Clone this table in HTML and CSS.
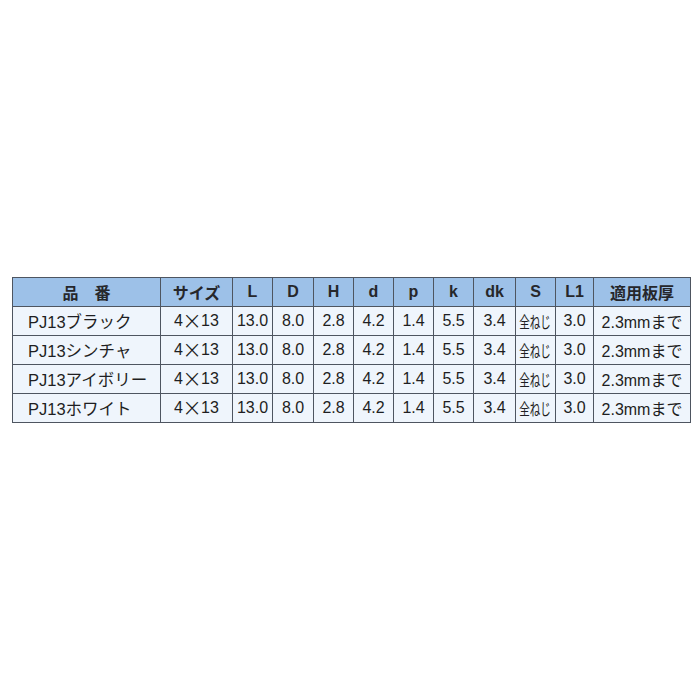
FILE: index.html
```html
<!DOCTYPE html>
<html lang="ja">
<head>
<meta charset="utf-8">
<link rel="stylesheet" href="styles.css">
</head>
<body>
<div class="page">
<table class="spec">
<colgroup>
<col class="c1"><col class="c2"><col class="c3"><col class="c4"><col class="c5"><col class="c6"><col class="c7"><col class="c8"><col class="c9"><col class="c10"><col class="c11"><col class="c12">
</colgroup>
<thead>
<tr><th>品　番</th><th>サイズ</th><th>L</th><th>D</th><th>H</th><th>d</th><th>p</th><th>k</th><th>dk</th><th>S</th><th>L1</th><th>適用板厚</th></tr>
</thead>
<tbody>
<tr><td class="name">PJ13ブラック</td><td>4<span class="x">×</span>13</td><td>13.0</td><td>8.0</td><td>2.8</td><td>4.2</td><td>1.4</td><td>5.5</td><td>3.4</td><td><span class="s">全ねじ</span></td><td>3.0</td><td>2.3mmまで</td></tr>
<tr><td class="name">PJ13シンチャ</td><td>4<span class="x">×</span>13</td><td>13.0</td><td>8.0</td><td>2.8</td><td>4.2</td><td>1.4</td><td>5.5</td><td>3.4</td><td><span class="s">全ねじ</span></td><td>3.0</td><td>2.3mmまで</td></tr>
<tr><td class="name">PJ13アイボリー</td><td>4<span class="x">×</span>13</td><td>13.0</td><td>8.0</td><td>2.8</td><td>4.2</td><td>1.4</td><td>5.5</td><td>3.4</td><td><span class="s">全ねじ</span></td><td>3.0</td><td>2.3mmまで</td></tr>
<tr><td class="name">PJ13ホワイト</td><td>4<span class="x">×</span>13</td><td>13.0</td><td>8.0</td><td>2.8</td><td>4.2</td><td>1.4</td><td>5.5</td><td>3.4</td><td><span class="s">全ねじ</span></td><td>3.0</td><td>2.3mmまで</td></tr>
</tbody>
</table>
</div>
</body>
</html>
```
FILE: styles.css
```css
html, body {
  margin: 0;
  padding: 0;
  background: #ffffff;
}
.page {
  padding: 277px 0 0 12px;
}
.spec {
  border-collapse: collapse;
  table-layout: fixed;
  width: 679px;
  font-family: "Liberation Sans", "Noto Sans CJK JP", sans-serif;
  font-size: 16px;
  color: #1e1e22;
}
.spec th, .spec td {
  border: 1px solid #4e5560;
  height: 28px;
  padding: 0;
  text-align: center;
  white-space: nowrap;
  overflow: hidden;
}
.spec th {
  background: #9dc1e8;
  font-weight: bold;
  color: #26272b;
}
.spec td {
  background: #eff5fc;
}
.spec td.name {
  text-align: left;
  padding-left: 15px;
  font-size: 16.5px;
}
.x {
  font-family: "DejaVu Sans", sans-serif;
  font-weight: 200;
  font-size: 24px;
  line-height: 0;
  vertical-align: -3px;
  margin: 0 -1px;
}
.s {
  display: inline-block;
  transform: scaleX(0.66);
  margin: 0 -8px;
  font-size: 16px;
}
.c1 { width: 148px; }
.c2 { width: 72px; }
.c3 { width: 40px; }
.c4 { width: 41px; }
.c5 { width: 40px; }
.c6 { width: 40px; }
.c7 { width: 40px; }
.c8 { width: 40px; }
.c9 { width: 42px; }
.c10 { width: 40px; }
.c11 { width: 38px; }
.c12 { width: 97px; }
```
